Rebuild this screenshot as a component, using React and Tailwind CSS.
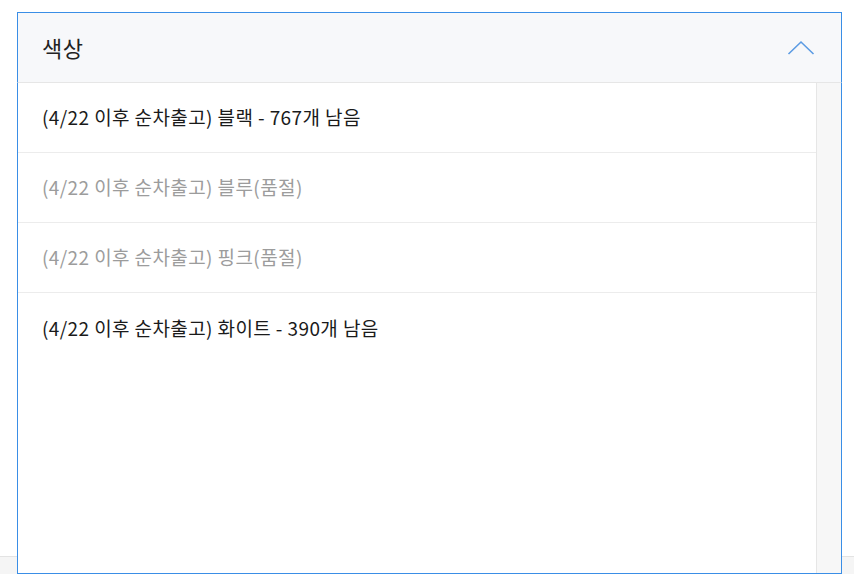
import React from "react";

const rows = [
  { text: "(4/22 이후 순차출고) 블랙 - 767개 남음", disabled: false },
  { text: "(4/22 이후 순차출고) 블루(품절)", disabled: true },
  { text: "(4/22 이후 순차출고) 핑크(품절)", disabled: true },
  { text: "(4/22 이후 순차출고) 화이트 - 390개 남음", disabled: false },
];

export default function App() {
  return (
    <div
      className="relative h-[574px] w-[854px] overflow-hidden bg-white"
      style={{ fontFamily: '"Noto Sans CJK KR", "Noto Sans", sans-serif' }}
    >
      <div className="flex h-full flex-col">
        <div className="flex-1" />
        <div className="h-[18px] border-t border-[#e3e3e3] bg-[#f5f5f5]" />
      </div>

      <div className="absolute left-[17px] top-[12px] flex h-[562px] w-[825px] flex-col">
        <div className="flex h-[71px] items-center justify-between border border-[#3a8ee6] border-b-[#e6e6e6] bg-[#f7f8fa] pl-[24px] pr-[26px]">
          <span className="text-[22px] tracking-[0.5px] text-[#222]">색상</span>
          <svg width="28" height="16" viewBox="0 0 28 16" fill="none">
            <polyline
              points="1.5,14 14,2 26.5,14"
              stroke="#5b9be3"
              strokeWidth="1.6"
              fill="none"
            />
          </svg>
        </div>
        <div className="flex flex-1 border-x border-b border-[#3a8ee6] bg-white">
          <div className="flex-1">
            {rows.map((r, i) => (
              <div
                key={i}
                className={`flex h-[70px] items-center pl-[24px] text-[19px] tracking-[0.4px] ${
                  i < rows.length - 1 ? "border-b border-[#ececec]" : ""
                } ${r.disabled ? "text-[#9c9c9c]" : "text-[#1a1a1a]"}`}
              >
                {r.text}
              </div>
            ))}
          </div>
          <div className="w-[25px] border-l border-[#e6e6e6] bg-[#f7f7f7]" />
        </div>
      </div>
    </div>
  );
}
